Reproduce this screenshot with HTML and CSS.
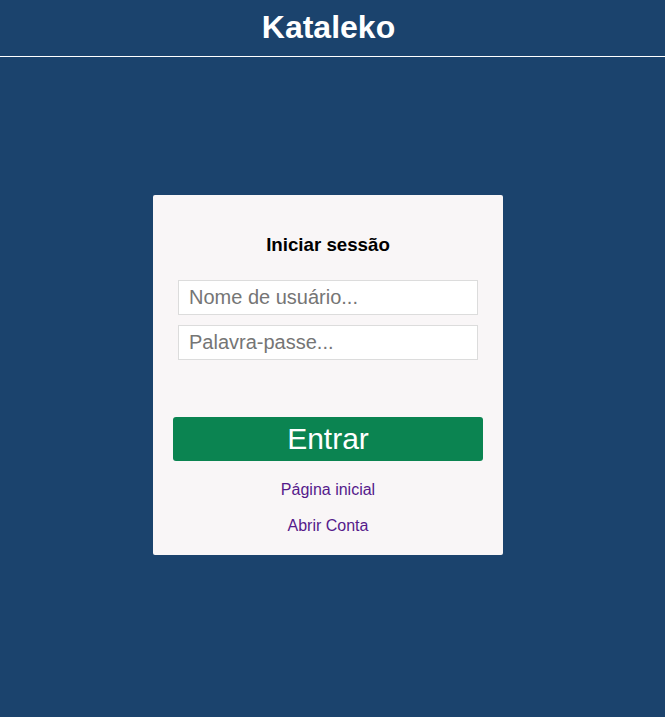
FILE: index.html
```html
<!DOCTYPE html>
<html lang="pt">
<head>
<meta charset="utf-8">
<title>Kataleko</title>
<link rel="stylesheet" href="styles.css">
</head>
<body>
<header class="topbar">
  <h1 class="brand">Kataleko</h1>
</header>
<main class="main">
  <form class="card">
    <h3 class="card-title">Iniciar sessão</h3>
    <div class="fields">
      <input class="field" type="text" placeholder="Nome de usuário...">
      <input class="field" type="password" placeholder="Palavra-passe...">
    </div>
    <button class="btn" type="button">Entrar</button>
    <a class="link link-first" href="#">Página inicial</a>
    <a class="link" href="#">Abrir Conta</a>
  </form>
</main>
</body>
</html>
```

FILE: styles.css
```css
html, body {
  margin: 0;
  padding: 0;
  background: #1b436d;
  font-family: "Liberation Sans", Arial, sans-serif;
  min-height: 100%;
}

.topbar {
  height: 56px;
  border-bottom: 1px solid #ffffff;
  display: flex;
  align-items: center;
  justify-content: center;
  padding-right: 8px;
}

.brand {
  margin: 0;
  color: #ffffff;
  font-size: 32px;
  font-weight: bold;
  line-height: 37px;
  position: relative;
  top: -1px;
}

.main {
  display: flex;
  justify-content: center;
  padding-top: 138px;
  padding-right: 9px;
}

.card {
  width: 350px;
  box-sizing: border-box;
  background: #f9f6f7;
  border-radius: 2px;
  padding: 20px;
  display: flex;
  flex-direction: column;
  align-items: center;
}

.card-title {
  margin: 19px 0 25px;
  font-size: 18.72px;
  line-height: 21px;
  font-weight: bold;
  color: #000000;
}

.fields {
  display: flex;
  flex-direction: column;
  gap: 10px;
  width: 300px;
}

.field {
  width: 300px;
  height: 35px;
  box-sizing: border-box;
  border: 1px solid #dcdcdc;
  background: #ffffff;
  padding: 0 10px;
  font-family: "Liberation Sans", Arial, sans-serif;
  font-size: 20px;
  color: #333333;
  outline: none;
  margin: 0;
}

.field::placeholder {
  color: #757575;
}

.btn {
  margin-top: 57px;
  width: 310px;
  height: 44px;
  border: none;
  border-radius: 3px;
  background: #0b8451;
  color: #ffffff;
  font-family: "Liberation Sans", Arial, sans-serif;
  font-size: 30px;
  line-height: 44px;
  padding: 0;
}

.link {
  display: block;
  margin-top: 18px;
  font-size: 16px;
  line-height: 18px;
  color: #551a8b;
  text-decoration: none;
}

.link-first {
  margin-top: 20px;
}
```
